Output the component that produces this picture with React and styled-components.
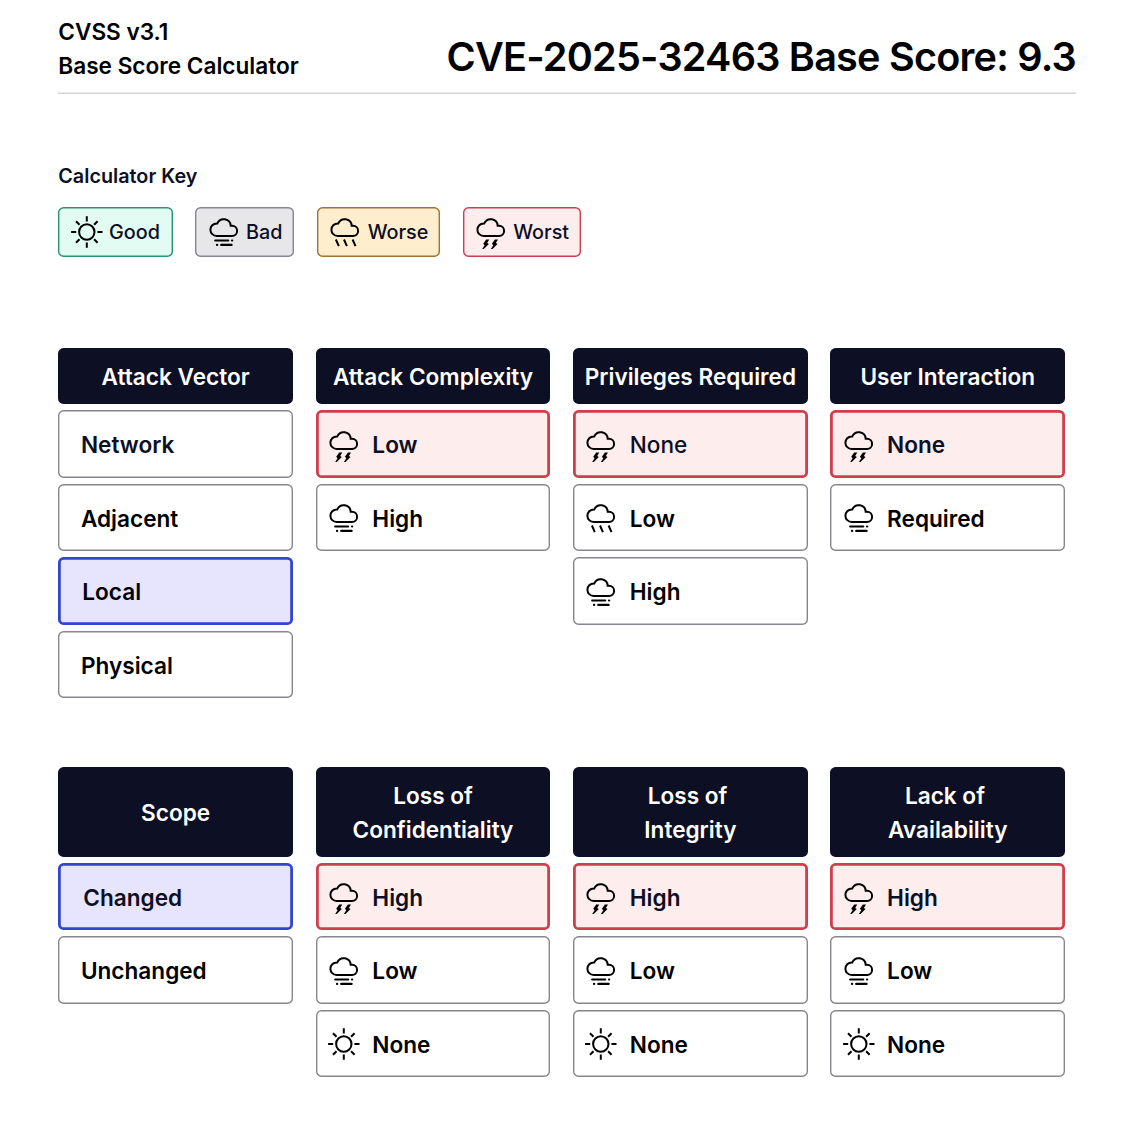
import React from "react";
import styled, { createGlobalStyle } from "styled-components";

const GlobalStyle = createGlobalStyle`
  *, *::before, *::after { box-sizing: border-box; }
  body {
    margin: 0;
    background: #fff;
    color: #000;
    font-family: Inter, "Liberation Sans", sans-serif;
  }
`;

const Page = styled.main`
  width: 1124px;
  min-height: 1129px;
  padding: 15px 48px 0 58.3px;
`;

const Header = styled.header`
  display: flex;
  justify-content: space-between;
  align-items: flex-start;
  height: 78.5px;
  box-shadow: inset 0 -1.5px 0 #d4d4d4;
`;

const Product = styled.div`
  font-size: 22.6px;
  font-weight: 600;
  line-height: 33.9px;
`;

const Title = styled.h1`
  margin: 14px 0 0;
  font-size: 39.6px;
  font-weight: 600;
  line-height: 56px;
  letter-spacing: -0.77px;
  white-space: nowrap;
`;

const KeySection = styled.section`
  margin-top: 68px;
`;

const KeyTitle = styled.h2`
  margin: 0;
  font-size: 19.8px;
  font-weight: 600;
  line-height: 28px;
  color: #0d0f24;
`;

const KeyList = styled.div`
  display: flex;
  gap: 22.6px;
  margin-top: 17px;
`;

const tones = {
  good: { bg: "#e2fbf3", line: "#2a9172" },
  bad: { bg: "#e7e7ea", line: "#86868f" },
  worse: { bg: "#ffeecd", line: "#9a7336" },
  worst: { bg: "#feeded", line: "#ce3e4c" },
};

const KeyItem = styled.div`
  display: flex;
  align-items: center;
  gap: 6.4px;
  width: ${(p) => p.$width}px;
  height: 50.6px;
  padding-left: 12.3px;
  border-radius: 5.6px;
  background: ${(p) => tones[p.$tone].bg};
  box-shadow: inset 0 0 0 1.4px ${(p) => tones[p.$tone].line};
  font-size: 19.8px;
  font-weight: 450;
  color: #0d0f24;
`;

const Metrics = styled.section`
  display: grid;
  grid-template-columns: repeat(4, 234.7px);
  column-gap: 22.7px;
  align-items: start;
  margin-top: ${(p) => p.$top}px;
`;

const Column = styled.div`
  display: flex;
  flex-direction: column;
  gap: 5.7px;
`;

const ColumnHead = styled.div`
  display: flex;
  align-items: center;
  justify-content: center;
  height: ${(p) => (p.$tall ? 90.4 : 56.5)}px;
  padding-top: 1.4px;
  border-radius: 5.6px;
  background: #0d0f24;
  color: #fff;
  font-size: 22.6px;
  font-weight: 600;
  line-height: 33.9px;
  text-align: center;
  white-space: pre;
`;

const states = {
  plain: { bg: "#fff", line: "#86868f", width: 1.4 },
  worst: { bg: "#feeded", line: "#ce3e4c", width: 2.8 },
  picked: { bg: "#e7e5fe", line: "#3344d0", width: 2.8 },
};

const Option = styled.div`
  display: flex;
  align-items: center;
  gap: 12.3px;
  height: 67.8px;
  padding-top: 1px;
  padding-left: ${(p) => p.$indent}px;
  border-radius: 5.6px;
  background: ${(p) => states[p.$state].bg};
  box-shadow: inset 0 0 0 ${(p) => states[p.$state].width}px ${(p) => states[p.$state].line};
  color: ${(p) => (p.$ink ? "#0d0f24" : "#000")};
  font-size: 22.6px;
  font-weight: ${(p) => p.$weight};
`;

const Glyph = styled.svg`
  flex: none;
  width: 32px;
  height: 32px;
  overflow: visible;
  fill: none;
  stroke: #000;
  stroke-width: 2;
`;

const CLOUD =
  "M8.7 20H24A5.1 5.1 0 0 0 24 9.8H22.7A7 7 0 0 0 9.3 7.4H8.7A6.3 6.3 0 0 0 8.7 20Z";

function Icon({ kind }) {
  if (kind === "good") {
    return (
      <Glyph viewBox="0 0 32 32">
        <circle cx="15.8" cy="16" r="7.7" />
        <path d="M15.8 .3V5.4M15.8 26.6V31.7M.1 16H5.2M26.4 16H31.5M5 5.2L8.5 8.7M23.1 23.3L26.6 26.8M5 26.8L8.5 23.3M23.1 8.7L26.6 5.2" />
      </Glyph>
    );
  }
  return (
    <Glyph viewBox="0 0 32 32">
      <path d={CLOUD} />
      {kind === "bad" && (
        <path
          strokeWidth="2.2"
          strokeLinecap="round"
          d="M7.2 24.5H20.2M24 24.5H24.2M9 28.9H9.2M13.2 28.9H23.6"
        />
      )}
      {kind === "worse" && (
        <path d="M6.9 23.5L9.8 30.1M15 23.5L17.9 30.1M23.6 23.5L26.5 30.1" />
      )}
      {kind === "worst" && (
        <path
          fill="#000"
          stroke="none"
          d="M11.2 23.5H14.3L12.2 26.9L13.8 28L8.8 32.9H7.2L9.6 29.2L8.2 27.8ZM19.9 23.5H23L20.9 26.9L22.5 28L17.5 32.9H15.9L18.3 29.2L16.9 27.8Z"
        />
      )}
    </Glyph>
  );
}

const keys = [
  { tone: "good", label: "Good", width: 114.5 },
  { tone: "bad", label: "Bad", width: 99 },
  { tone: "worse", label: "Worse", width: 123 },
  { tone: "worst", label: "Worst", width: 118.5 },
];

const exploitability = [
  {
    head: "Attack Vector",
    options: [
      { label: "Network", ink: true },
      { label: "Adjacent" },
      { label: "Local", state: "picked", indent: 24 },
      { label: "Physical" },
    ],
  },
  {
    head: "Attack Complexity",
    options: [
      { label: "Low", icon: "worst", state: "worst", ink: true },
      { label: "High", icon: "bad" },
    ],
  },
  {
    head: "Privileges Required",
    options: [
      { label: "None", icon: "worst", state: "worst", ink: true, weight: 500 },
      { label: "Low", icon: "worse" },
      { label: "High", icon: "bad" },
    ],
  },
  {
    head: "User Interaction",
    options: [
      { label: "None", icon: "worst", state: "worst", ink: true },
      { label: "Required", icon: "bad" },
    ],
  },
];

const impactOptions = [
  { label: "High", icon: "worst", state: "worst", ink: true },
  { label: "Low", icon: "bad" },
  { label: "None", icon: "good" },
];

const impact = [
  {
    head: "Scope",
    options: [
      { label: "Changed", state: "picked", ink: true, indent: 25 },
      { label: "Unchanged" },
    ],
  },
  { head: "Loss of\nConfidentiality", options: impactOptions },
  { head: "Loss of\u00a0\nIntegrity", options: impactOptions },
  { head: "Lack of\u00a0\nAvailability", options: impactOptions },
];

function MetricGroup({ columns, tall, top }) {
  return (
    <Metrics $top={top}>
      {columns.map((column) => (
        <Column key={column.head}>
          <ColumnHead $tall={tall}>{column.head}</ColumnHead>
          {column.options.map((o) => (
            <Option
              key={o.label}
              $state={o.state || "plain"}
              $ink={o.ink}
              $weight={o.weight || 600}
              $indent={o.icon ? 12.4 : o.indent || 22.6}
            >
              {o.icon && <Icon kind={o.icon} />}
              <span>{o.label}</span>
            </Option>
          ))}
        </Column>
      ))}
    </Metrics>
  );
}

export default function App() {
  return (
    <>
      <GlobalStyle />
      <Page>
        <Header>
          <Product>
            CVSS v3.1
            <br />
            Base Score Calculator
          </Product>
          <Title>CVE-2025-32463 Base Score: 9.3</Title>
        </Header>
        <KeySection>
          <KeyTitle>Calculator Key</KeyTitle>
          <KeyList>
            {keys.map((k) => (
              <KeyItem key={k.tone} $tone={k.tone} $width={k.width}>
                <Icon kind={k.tone} />
                <span>{k.label}</span>
              </KeyItem>
            ))}
          </KeyList>
        </KeySection>
        <MetricGroup columns={exploitability} top={90.9} />
        <MetricGroup columns={impact} tall top={68.2} />
      </Page>
    </>
  );
}
